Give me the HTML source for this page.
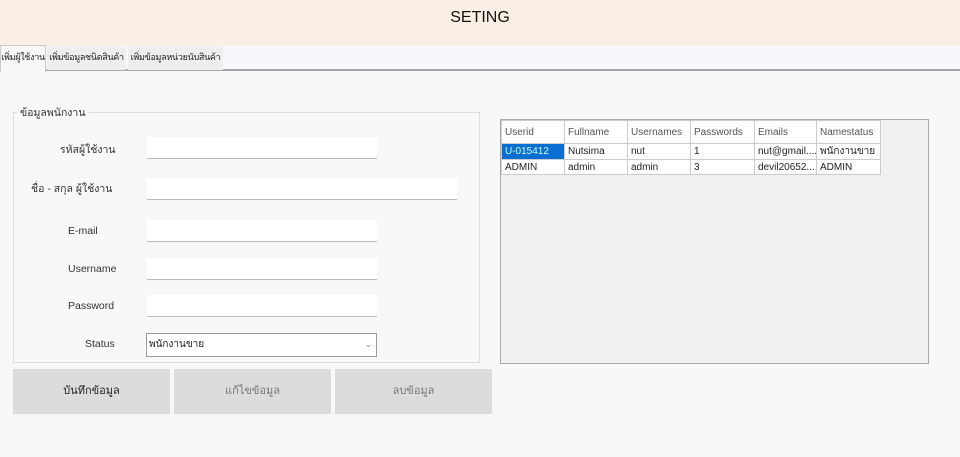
<!DOCTYPE html>
<html><head><meta charset="utf-8"><style>
*{margin:0;padding:0;box-sizing:border-box}
body{width:960px;height:457px;background:#f8f8f8;font-family:"Liberation Sans","Noto Sans CJK SC",sans-serif;position:relative;overflow:hidden;color:#222}
.a{position:absolute}
.hdr{left:0;top:0;width:960px;height:46px;background:#faefe4;text-align:center;font-size:16px;line-height:36px;color:#111}
.tabs{left:0;top:46px;width:960px;height:25px;background:#f7f8fc;border-bottom:2px solid #a5a5a5}
.tab{top:47px;height:23px;font-size:9px;line-height:20px;white-space:nowrap;overflow:hidden;text-align:center;letter-spacing:-0.3px;color:#222}
.lbl{font-size:10.5px;color:#333}
.in{background:#fff;border-bottom:1px solid #bbb;height:22px}
.btn{background:#dcdcdc;top:369px;width:157px;height:45px;text-align:center;line-height:45px;font-size:11px;color:#777}
table{border-collapse:collapse;font-size:10px;table-layout:fixed;width:379px}
td{border:1px solid #ccc;height:15px;padding:0 3px;white-space:nowrap;overflow:hidden}
tr.h td{height:23px;color:#555}
</style></head><body>
<div class="a hdr">SETING</div>
<div class="a tabs"></div>
<div class="a tab" style="left:0;width:46px;background:#f8f8f8;border:1px solid #ccc;border-bottom:none;top:45px;height:27px;line-height:22px">เพิ่มผู้ใช้งาน</div>
<div class="a tab" style="left:47px;width:79px;background:#eee">เพิ่มข้อมูลชนิดสินค้า</div>
<div class="a tab" style="left:128px;width:95px;background:#eee">เพิ่มข้อมูลหน่วยนับสินค้า</div>

<div class="a" style="left:13px;top:112px;width:467px;height:251px;border:1px solid #ddd"></div>
<div class="a lbl" style="left:17px;top:104px;background:#f8f8f8;padding:0 3px">ข้อมูลพนักงาน</div>

<div class="a lbl" style="left:60px;top:141px">รหัสผู้ใช้งาน</div>
<div class="a in" style="left:147px;top:137px;width:230px"></div>
<div class="a lbl" style="left:31px;top:180px">ชื่อ - สกุล ผู้ใช้งาน</div>
<div class="a in" style="left:147px;top:178px;width:310px"></div>
<div class="a lbl" style="left:68px;top:225px">E-mail</div>
<div class="a in" style="left:147px;top:220px;width:230px"></div>
<div class="a lbl" style="left:68px;top:263px">Username</div>
<div class="a in" style="left:147px;top:258px;width:230px"></div>
<div class="a lbl" style="left:68px;top:300px">Password</div>
<div class="a in" style="left:147px;top:295px;width:230px"></div>
<div class="a lbl" style="left:85px;top:338px">Status</div>
<div class="a" style="left:146px;top:333px;width:231px;height:24px;background:#fff;border:1px solid #999;font-size:10px;line-height:21px;padding-left:2px">พนักงานขาย<span style="position:absolute;right:4px;top:0;color:#888;font-size:9px">⌄</span></div>

<div class="a btn" style="left:13px;color:#222">บันทึกข้อมูล</div>
<div class="a btn" style="left:174px">แก้ไขข้อมูล</div>
<div class="a btn" style="left:335px">ลบข้อมูล</div>

<div class="a" style="left:500px;top:119px;width:429px;height:245px;background:#f0f0f0;border:1px solid #aaa"></div>
<table class="a" style="left:501px;top:120px;background:#fff">
<colgroup><col style="width:63px"><col style="width:63px"><col style="width:63px"><col style="width:64px"><col style="width:62px"><col style="width:64px"></colgroup>
<tr class="h"><td>Userid</td><td>Fullname</td><td>Usernames</td><td>Passwords</td><td>Emails</td><td>Namestatus</td></tr>
<tr><td style="background:#0a6fd0;color:#cfe">U-015412</td><td>Nutsima</td><td>nut</td><td>1</td><td>nut@gmail....</td><td>พนักงานขาย</td></tr>
<tr><td>ADMIN</td><td>admin</td><td>admin</td><td>3</td><td>devil20652...</td><td>ADMIN</td></tr>
</table>
</body></html>
